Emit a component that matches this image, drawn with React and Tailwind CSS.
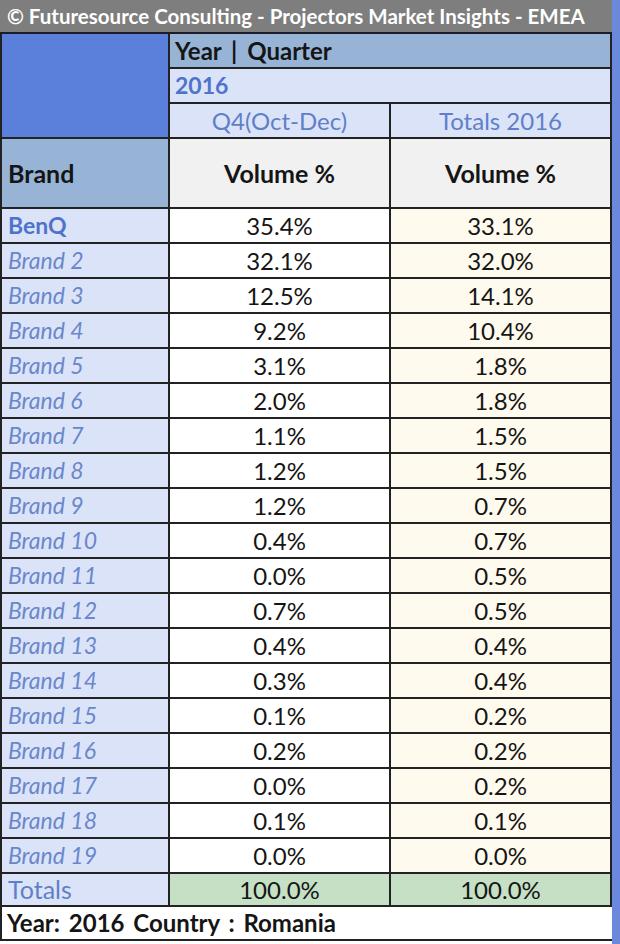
const rows = [
  ["BenQ", "35.4%", "33.1%"],
  ["Brand 2", "32.1%", "32.0%"],
  ["Brand 3", "12.5%", "14.1%"],
  ["Brand 4", "9.2%", "10.4%"],
  ["Brand 5", "3.1%", "1.8%"],
  ["Brand 6", "2.0%", "1.8%"],
  ["Brand 7", "1.1%", "1.5%"],
  ["Brand 8", "1.2%", "1.5%"],
  ["Brand 9", "1.2%", "0.7%"],
  ["Brand 10", "0.4%", "0.7%"],
  ["Brand 11", "0.0%", "0.5%"],
  ["Brand 12", "0.7%", "0.5%"],
  ["Brand 13", "0.4%", "0.4%"],
  ["Brand 14", "0.3%", "0.4%"],
  ["Brand 15", "0.1%", "0.2%"],
  ["Brand 16", "0.2%", "0.2%"],
  ["Brand 17", "0.0%", "0.2%"],
  ["Brand 18", "0.1%", "0.1%"],
  ["Brand 19", "0.0%", "0.0%"],
];

export default function App() {
  return (
    <div className="w-[620px] h-[944px] bg-white flex font-['Lato',sans-serif] text-[24px] leading-none text-[#151515]">
      <div className="w-[612px] flex flex-col">
        {/* Title bar */}
        <div className="h-[34px] bg-[#7e7e7e] border-b-2 border-[#1c1c2a] pl-[7px] flex items-center text-white font-bold text-[20.5px]">
          © Futuresource Consulting - Projectors Market Insights - EMEA
        </div>

        <div className="border-l-2 border-[#222]">
          {/* Header block */}
          <div className="grid grid-cols-[168px_221px_221px]">
            <div className="row-span-3 bg-[#5b80dc] border-r-2 border-b-2 border-[#222]" />
            <div className="col-span-2 h-[35px] bg-[#97b4d6] border-b-2 border-r-2 border-[#222] pl-[5px] flex items-center font-bold text-[24px] [word-spacing:4px]">
              Year | Quarter
            </div>
            <div className="col-span-2 h-[35px] bg-[#dbe3f9] border-b-2 border-r-2 border-[#222] pl-[5px] flex items-center font-bold text-[23px] text-[#4f73cb]">
              2016
            </div>
            <div className="h-[35px] bg-[#dbe3f9] border-b-2 border-r-2 border-[#222] flex items-center justify-center text-[#5f7fc8]">
              Q4(Oct-Dec)
            </div>
            <div className="h-[35px] bg-[#dbe3f9] border-b-2 border-r-2 border-[#222] flex items-center justify-center text-[#5f7fc8]">
              Totals 2016
            </div>
            <div className="h-[70px] bg-[#97b4d6] border-b-2 border-r-2 border-[#222] pl-[6px] flex items-center font-bold text-[25px]">
              Brand
            </div>
            <div className="h-[70px] bg-[#f1f1f1] border-b-2 border-r-2 border-[#222] flex items-center justify-center font-bold text-[25px]">
              Volume %
            </div>
            <div className="h-[70px] bg-[#f1f1f1] border-b-2 border-r-2 border-[#222] flex items-center justify-center font-bold text-[25px]">
              Volume %
            </div>

            {rows.map(([brand, q4, total], i) => (
              <div key={brand} className="contents">
                <div
                  className={
                    i === 0
                      ? "h-[35px] bg-[#dbe3f9] border-b-2 border-r-2 border-[#222] pl-[6px] flex items-center font-bold text-[23px] text-[#4f73cb]"
                      : "h-[35px] bg-[#dbe3f9] border-b-2 border-r-2 border-[#222] pl-[6px] flex items-center italic text-[23px] text-[#6a87ca]"
                  }
                >
                  {brand}
                </div>
                <div className="h-[35px] bg-white border-b-2 border-r-2 border-[#222] flex items-center justify-center">
                  {q4}
                </div>
                <div className="h-[35px] bg-[#fffaee] border-b-2 border-r-2 border-[#222] flex items-center justify-center">
                  {total}
                </div>
              </div>
            ))}

            <div className="h-[33px] bg-[#dbe3f9] border-b-2 border-r-2 border-[#222] pl-[6px] flex items-center text-[#5f7fc8] text-[25px]">
              Totals
            </div>
            <div className="h-[33px] bg-[#c5e0c4] border-b-2 border-r-2 border-[#222] flex items-center justify-center">
              100.0%
            </div>
            <div className="h-[33px] bg-[#c5e0c4] border-b-2 border-r-2 border-[#222] flex items-center justify-center">
              100.0%
            </div>
          </div>

          {/* Footer */}
          <div className="h-[34px] bg-white border-b-2 border-[#222] pl-[5px] flex items-center font-bold text-[24px] [word-spacing:3px]">
            Year: 2016 Country : Romania
          </div>
        </div>
      </div>
      <div className="w-[8px] bg-[#6a88dc]" />
    </div>
  );
}
